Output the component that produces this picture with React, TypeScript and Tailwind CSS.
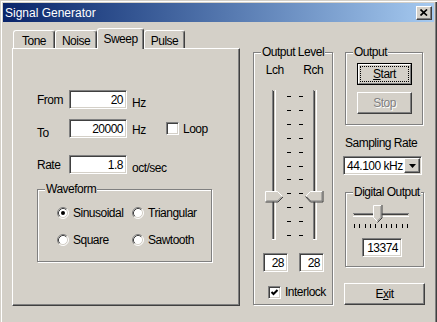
import React from 'react';

const raised =
    'border border-t-white border-l-white border-r-[#404040] border-b-[#404040] shadow-[inset_-1px_-1px_0_#808080]';
const sunken =
    'bg-white border border-t-[#808080] border-l-[#808080] border-r-white border-b-white shadow-[inset_1px_1px_0_#404040,inset_-1px_-1px_0_#d4d0c8]';
const etched = 'relative border border-[#808080] shadow-[1px_1px_0_#fff,inset_1px_1px_0_#fff]';

function Group({ label, className, children }: { label: string; className: string; children?: React.ReactNode }) {
    return (
        <div className={`${etched} ${className}`}>
            <span className="absolute -top-[8px] left-[7px] bg-[#d4d0c8] px-[1px] leading-[14px]">{label}</span>
            {children}
        </div>
    );
}

function Edit({ value, className }: { value: string; className: string }) {
    return (
        <div className={`${sunken} ${className} flex items-center justify-end pr-[3px] leading-none`}>{value}</div>
    );
}

function Check({ checked }: { checked?: boolean }) {
    return (
        <div className={`${sunken} w-[13px] h-[13px] shrink-0 flex items-center justify-center`}>
            {checked && (
                <svg width="9" height="9" viewBox="0 0 9 9">
                    <polyline points="1.5,4 3.5,6 7.5,2" fill="none" stroke="#000" strokeWidth="2" />
                </svg>
            )}
        </div>
    );
}

function Radio({ checked }: { checked?: boolean }) {
    return (
        <svg width="12" height="12" viewBox="0 0 12 12" className="shrink-0">
            <circle cx="6" cy="6" r="5" fill="#fff" />
            <path d="M2.11 9.89 A5.5 5.5 0 0 1 9.89 2.11" fill="none" stroke="#808080" />
            <path d="M9.89 2.11 A5.5 5.5 0 0 1 2.11 9.89" fill="none" stroke="#fff" />
            <path d="M2.82 9.18 A4.5 4.5 0 0 1 9.18 2.82" fill="none" stroke="#404040" />
            <path d="M9.18 2.82 A4.5 4.5 0 0 1 2.82 9.18" fill="none" stroke="#d4d0c8" />
            {checked && <circle cx="6" cy="6" r="2" fill="#000" />}
        </svg>
    );
}

function LevelSliders() {
    const ticks = Array.from({ length: 11 }, (_, i) => 6 + i * 13.9);
    const track = (x: number) => (
        <g>
            <rect x={x} y={0} width={1} height={150} fill="#808080" />
            <rect x={x + 1} y={1} width={1} height={148} fill="#404040" />
            <rect x={x + 2} y={1} width={1} height={148} fill="#d4d0c8" />
            <rect x={x + 3} y={0} width={1} height={150} fill="#fff" />
            <rect x={x} y={149} width={4} height={1} fill="#fff" />
        </g>
    );
    return (
        <svg width="78" height="150" viewBox="0 0 78 150">
            {track(18)}
            {track(59)}
            {ticks.map((y) => (
                <g key={y}>
                    <rect x={33} y={Math.round(y)} width={4} height={1} fill="#000" />
                    <rect x={45} y={Math.round(y)} width={4} height={1} fill="#000" />
                </g>
            ))}
            {/* left thumb, pointing right */}
            <polygon points="11.5,101.5 23.5,101.5 28.5,106.5 23.5,111.5 11.5,111.5" fill="#d4d0c8" />
            <polyline points="11.5,111.5 11.5,101.5 23.5,101.5 28,106" fill="none" stroke="#fff" />
            <polyline points="11.5,112 24,112 29,107" fill="none" stroke="#404040" />
            <polyline points="12.5,111 23.5,111 27.5,107" fill="none" stroke="#808080" />
            {/* right thumb, pointing left */}
            <polygon points="68.5,101.5 56.5,101.5 51.5,106.5 56.5,111.5 68.5,111.5" fill="#d4d0c8" />
            <polyline points="52,106 56.5,101.5 68.5,101.5" fill="none" stroke="#fff" />
            <polyline points="51.5,106.5 56.5,112 69,112 69,101" fill="none" stroke="#404040" />
            <polyline points="53,107 57,111 68,111 68,102" fill="none" stroke="#808080" />
        </svg>
    );
}

function DigitalSlider() {
    const ticks = Array.from({ length: 11 }, (_, i) => 2 + Math.round(i * 5.3));
    return (
        <svg width="60" height="28" viewBox="0 0 60 28">
            <rect x={1} y={9} width={56} height={1} fill="#808080" />
            <rect x={2} y={10} width={54} height={1} fill="#404040" />
            <rect x={2} y={11} width={54} height={1} fill="#d4d0c8" />
            <rect x={1} y={12} width={56} height={1} fill="#fff" />
            <polygon points="21.5,1.5 29.5,1.5 29.5,13.5 25.5,17.5 21.5,13.5" fill="#d4d0c8" />
            <polyline points="25,17 21.5,13.5 21.5,1.5 29,1.5" fill="none" stroke="#fff" />
            <polyline points="30,1 30,14 25.5,18.5" fill="none" stroke="#404040" />
            <polyline points="29,2 29,13.5 25.5,17" fill="none" stroke="#808080" />
            {ticks.map((x) => (
                <rect key={x} x={x} y={20} width={1} height={4} fill="#000" />
            ))}
        </svg>
    );
}

export default function App() {
    return (
        <div className="w-[437px] h-[322px] overflow-hidden bg-[#d4d0c8] text-black text-[12px] tracking-[-0.5px] font-['Liberation_Sans',Arial,sans-serif] shadow-[inset_1px_1px_0_#d4d0c8,inset_2px_2px_0_#fff,inset_-1px_0_0_#404040,inset_-2px_0_0_#808080] pt-[3px] px-[3px]">
            {/* title bar */}
            <div className="h-[19px] flex items-center bg-gradient-to-r from-[#0a246a] to-[#a6caf0] pl-[2px] pr-[2px]">
                <span className="text-white tracking-normal leading-none">Signal Generator</span>
                <div className={`${raised} bg-[#d4d0c8] ml-auto w-[16px] h-[14px] flex items-center justify-center`}>
                    <svg width="8" height="7" viewBox="0 0 8 7">
                        <path d="M0.5 0.5 L7 6.5 M7 0.5 L0.5 6.5" stroke="#000" strokeWidth="1.7" />
                    </svg>
                </div>
            </div>

            <div className="flex items-start pt-[6px] pl-[9px]">
                {/* tab control */}
                <div className="w-[228px] flex flex-col">
                    <div className="h-[20px] flex items-end pl-[1px]">
                        {['Tone', 'Noise', 'Sweep', 'Pulse'].map((t) => {
                            const active = t === 'Sweep';
                            const w = { Tone: 'w-[42px]', Noise: 'w-[42px]', Sweep: 'w-[47px]', Pulse: 'w-[41px]' }[t];
                            return (
                                <div
                                    key={t}
                                    className={`${w} ${active ? 'h-[21px] -mb-[1px] relative z-10 pt-[0px]' : 'h-[18px] pt-[3px]'} flex items-center justify-center bg-[#d4d0c8] border-t border-l border-white border-r border-r-[#404040] rounded-t-[3px] shadow-[inset_-1px_0_0_#808080] leading-none`}
                                >
                                    {t}
                                </div>
                            );
                        })}
                    </div>
                    <div className="h-[258px] border border-t-white border-l-white border-r-[#404040] border-b-[#404040] shadow-[inset_-1px_-1px_0_#808080] pl-[24px] pt-[41px] flex flex-col">
                        <div className="flex items-center h-[19px]">
                            <span className="w-[32px]">From</span>
                            <Edit value="20" className="w-[58px] h-[19px]" />
                            <span className="w-[39px] pl-[5px] mt-[7px]">Hz</span>
                        </div>
                        <div className="flex items-center h-[19px] mt-[10px]">
                            <span className="w-[32px] mt-[9px]">To</span>
                            <Edit value="20000" className="w-[58px] h-[19px]" />
                            <span className="w-[39px] pl-[5px] mt-[3px]">Hz</span>
                            <Check />
                            <span className="ml-[4px]">Loop</span>
                        </div>
                        <div className="flex items-center h-[19px] mt-[17px]">
                            <span className="w-[32px]">Rate</span>
                            <Edit value="1.8" className="w-[58px] h-[19px]" />
                            <span className="pl-[5px] mt-[7px]">oct/sec</span>
                        </div>
                        <Group label="Waveform" className="mt-[15px] w-[175px] h-[73px]">
                            <div className="grid grid-cols-[75px_auto] gap-y-[15px] pl-[19px] pt-[17px]">
                                {[
                                    ['Sinusoidal', true],
                                    ['Triangular', false],
                                    ['Square', false],
                                    ['Sawtooth', false],
                                ].map(([l, c]) => (
                                    <div key={l as string} className="flex items-center gap-[4px] h-[12px]">
                                        <Radio checked={c as boolean} />
                                        <span className="leading-none">{l as string}</span>
                                    </div>
                                ))}
                            </div>
                        </Group>
                    </div>
                </div>

                {/* output level */}
                <Group label="Output Level" className="ml-[13px] mt-[24px] w-[80px] h-[253px]">
                    <div className="flex flex-col pt-[10px]">
                        <div className="flex leading-[14px]">
                            <span className="w-[40px] ml-[1px] text-center">Lch</span>
                            <span className="w-[38px] text-center">Rch</span>
                        </div>
                        <div className="mt-[13px]">
                            <LevelSliders />
                        </div>
                        <div className="flex gap-[11px] pl-[9px] mt-[13px]">
                            <Edit value="28" className="w-[25px] h-[19px]" />
                            <Edit value="28" className="w-[25px] h-[19px]" />
                        </div>
                        <div className="flex items-center pl-[14px] mt-[11px]">
                            <Check checked />
                            <span className="ml-[4px]">Interlock</span>
                        </div>
                    </div>
                </Group>

                {/* right column */}
                <div className="ml-[10px] mt-[24px] w-[83px] flex flex-col items-start">
                    <Group label="Output" className="ml-[2px] w-[78px] h-[73px]">
                        <div className="flex flex-col pl-[11px] pt-[10px]">
                            <div className="w-[55px] h-[22px] border border-black">
                                <div className="h-full border border-t-white border-l-white border-r-[#808080] border-b-[#808080] p-[1px]">
                                    <div className="h-full border border-dotted border-black flex items-center justify-center leading-none">
                                        <span><span className="underline">S</span>tart</span>
                                    </div>
                                </div>
                            </div>
                            <div className={`${raised} mt-[7px] w-[55px] h-[22px] flex items-center justify-center text-[#808080] [text-shadow:1px_1px_0_#fff] leading-none`}>
                                Stop
                            </div>
                        </div>
                    </Group>
                    <span className="ml-[2px] mt-[11px] leading-[14px]">Sampling Rate</span>
                    <div className={`${sunken} mt-[6px] w-[79px] h-[19px] flex items-center pl-[3px] p-[1px]`}>
                        <span className="leading-none">44.100 kHz</span>
                        <div className={`${raised} bg-[#d4d0c8] ml-auto w-[16px] h-full flex items-center justify-center`}>
                            <svg width="7" height="4" viewBox="0 0 7 4">
                                <polygon points="0,0 7,0 3.5,4" fill="#000" />
                            </svg>
                        </div>
                    </div>
                    <Group label="Digital Output" className="ml-[2px] mt-[17px] w-[79px] h-[75px]">
                        <div className="flex flex-col pl-[6px] pt-[11px]">
                            <DigitalSlider />
                            <Edit value="13374" className="ml-[10px] mt-[6px] w-[40px] h-[19px]" />
                        </div>
                    </Group>
                    <div className={`${raised} ml-[1px] mt-[16px] w-[81px] h-[22px] flex items-center justify-center leading-none`}>
                        <span>E<span className="underline">x</span>it</span>
                    </div>
                </div>
            </div>
        </div>
    );
}
